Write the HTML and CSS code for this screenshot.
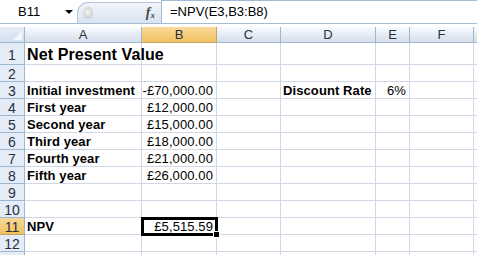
FILE: index.html
```html
<!DOCTYPE html>
<html lang="en">
<head>
    <meta charset="UTF-8">
    <title>Net Present Value</title>
    <link rel="stylesheet" href="styles.css">
</head>
<body>
    <!-- Formula Bar -->
    <div class="formula-bar">
        <div class="name-box">
            <span class="name-text">B11</span>
            <span class="name-arrow"></span>
        </div>
        <div class="fx-pill">
            <span class="pill-knob"></span>
            <span class="fx">f<sub>x</sub></span>
        </div>
        <div class="formula-input">=NPV(E3,B3:B8)</div>
    </div>

    <!-- Sheet -->
    <div class="sheet">
        <div class="corner"><span class="corner-tri"></span></div>
        <div class="col-head">A</div>
        <div class="col-head selected">B</div>
        <div class="col-head">C</div>
        <div class="col-head">D</div>
        <div class="col-head">E</div>
        <div class="col-head">F</div>
        <div class="col-head"></div>

        <div class="row-head">1</div>
        <div class="cell title">Net Present Value</div>
        <div class="cell"></div><div class="cell"></div><div class="cell"></div><div class="cell"></div><div class="cell"></div><div class="cell"></div>

        <div class="row-head">2</div>
        <div class="cell"></div><div class="cell"></div><div class="cell"></div><div class="cell"></div><div class="cell"></div><div class="cell"></div><div class="cell"></div>

        <div class="row-head">3</div>
        <div class="cell bold">Initial investment</div>
        <div class="cell num">-£70,000.00</div>
        <div class="cell"></div>
        <div class="cell bold">Discount Rate</div>
        <div class="cell num">6%</div>
        <div class="cell"></div><div class="cell"></div>

        <div class="row-head">4</div>
        <div class="cell bold">First year</div>
        <div class="cell num">£12,000.00</div>
        <div class="cell"></div><div class="cell"></div><div class="cell"></div><div class="cell"></div><div class="cell"></div>

        <div class="row-head">5</div>
        <div class="cell bold">Second year</div>
        <div class="cell num">£15,000.00</div>
        <div class="cell"></div><div class="cell"></div><div class="cell"></div><div class="cell"></div><div class="cell"></div>

        <div class="row-head">6</div>
        <div class="cell bold">Third year</div>
        <div class="cell num">£18,000.00</div>
        <div class="cell"></div><div class="cell"></div><div class="cell"></div><div class="cell"></div><div class="cell"></div>

        <div class="row-head">7</div>
        <div class="cell bold">Fourth year</div>
        <div class="cell num">£21,000.00</div>
        <div class="cell"></div><div class="cell"></div><div class="cell"></div><div class="cell"></div><div class="cell"></div>

        <div class="row-head">8</div>
        <div class="cell bold">Fifth year</div>
        <div class="cell num">£26,000.00</div>
        <div class="cell"></div><div class="cell"></div><div class="cell"></div><div class="cell"></div><div class="cell"></div>

        <div class="row-head">9</div>
        <div class="cell"></div><div class="cell"></div><div class="cell"></div><div class="cell"></div><div class="cell"></div><div class="cell"></div><div class="cell"></div>

        <div class="row-head">10</div>
        <div class="cell"></div><div class="cell"></div><div class="cell"></div><div class="cell"></div><div class="cell"></div><div class="cell"></div><div class="cell"></div>

        <div class="row-head selected">11</div>
        <div class="cell bold">NPV</div>
        <div class="cell num active">£5,515.59<span class="fill-handle"></span></div>
        <div class="cell"></div><div class="cell"></div><div class="cell"></div><div class="cell"></div><div class="cell"></div>

        <div class="row-head">12</div>
        <div class="cell"></div><div class="cell"></div><div class="cell"></div><div class="cell"></div><div class="cell"></div><div class="cell"></div><div class="cell"></div>

        <!-- Row 13, only its top edge is visible -->
        <div class="row-head stub"></div>
        <div class="cell stub"></div><div class="cell stub"></div><div class="cell stub"></div><div class="cell stub"></div><div class="cell stub"></div><div class="cell stub"></div><div class="cell stub"></div>
    </div>
</body>
</html>
```

FILE: styles.css
```css
/* Colour Palette */
:root {
    --grid-line: #d0d7e5;
    --head-line: #9eb6ce;
    --head-text: #27313f;
    --bar-line: #a5bad4;
    --sel-top: #f9d99a;
    --sel-bottom: #f1c15f;
}

body {
    margin: 0;
    background: #ffffff;
    font-family: 'Liberation Sans', Arial, sans-serif;
    font-size: 13px;
    color: #000000;
    overflow: hidden;
}

/* Formula Bar */
.formula-bar {
    display: flex;
    height: 24px;
    margin-bottom: 3px;
    border-bottom: 1px solid var(--bar-line);
    box-sizing: border-box;
}

.name-box {
    width: 77px;
    display: flex;
    align-items: center;
    padding-left: 18px;
    box-sizing: border-box;
}

.name-text {
    width: 47px;
}

.name-arrow {
    width: 0;
    height: 0;
    border-left: 4px solid transparent;
    border-right: 4px solid transparent;
    border-top: 4px solid #000000;
}

.fx-pill {
    width: 84px;
    margin-top: 2px;
    display: flex;
    align-items: center;
    justify-content: space-between;
    padding: 0 5px 0 5px;
    box-sizing: border-box;
    border: 1px solid #b6c6da;
    border-right: none;
    border-bottom: none;
    border-radius: 11px 0 0 0;
    background: linear-gradient(#f2f5fa, #d9e3f0);
}

.pill-knob {
    width: 10px;
    height: 12px;
    border-radius: 50%;
    background: radial-gradient(circle at 45% 45%, #f4f4f4, #b9bcc1);
}

.fx {
    font-family: 'Liberation Serif', serif;
    font-style: italic;
    font-weight: bold;
    font-size: 14px;
    color: #4a4a4a;
    margin-right: 1px;
}

.fx sub {
    font-size: 9px;
    vertical-align: -1px;
}

.formula-input {
    flex: 1;
    border-top: 1px solid var(--bar-line);
    border-left: 1px solid var(--bar-line);
    padding: 3px 0 0 8px;
    box-sizing: border-box;
}

/* Sheet Grid */
.sheet {
    display: grid;
    grid-template-columns: 25px 117px 75px 64px 95px 34px 64px 1fr;
    grid-template-rows: 16px 22px repeat(11, 17px) 3px;
}

.corner {
    position: relative;
    background: linear-gradient(#e6edf6, #d4dfee);
    border-right: 1px solid var(--head-line);
    border-bottom: 1px solid var(--head-line);
}

.corner-tri {
    position: absolute;
    right: 2px;
    bottom: 2px;
    width: 0;
    height: 0;
    border-left: 9px solid transparent;
    border-bottom: 9px solid #f4f7fb;
}

.col-head {
    display: flex;
    align-items: center;
    justify-content: center;
    background: linear-gradient(#f9fbfd, #e3e9f3 60%, #d6dfec);
    border-right: 1px solid var(--head-line);
    border-bottom: 1px solid var(--head-line);
    color: var(--head-text);
    box-sizing: border-box;
}

.col-head.selected {
    background: linear-gradient(var(--sel-top), var(--sel-bottom));
    border-right-color: #c2a36a;
    border-bottom-color: #c2a36a;
}

.row-head {
    display: flex;
    align-items: center;
    justify-content: center;
    padding-top: 2px;
    background: #e4ecf7;
    border-right: 1px solid var(--head-line);
    border-bottom: 1px solid var(--head-line);
    color: var(--head-text);
    font-size: 14px;
    box-sizing: border-box;
}

.row-head.selected {
    background: linear-gradient(var(--sel-top), var(--sel-bottom));
    border-bottom-color: #c2a36a;
}

.cell {
    display: flex;
    align-items: flex-end;
    padding: 0 3px 0 2px;
    border-right: 1px solid var(--grid-line);
    border-bottom: 1px solid var(--grid-line);
    box-sizing: border-box;
    white-space: nowrap;
    overflow: visible;
    letter-spacing: 0.1px;
}

.row-head.stub,
.cell.stub {
    padding: 0;
    border-bottom: none;
}

.cell.bold {
    font-weight: bold;
}

.cell.title {
    font-weight: bold;
    font-size: 16px;
    padding-bottom: 0;
}

.cell.num {
    justify-content: flex-end;
}

/* Active cell */
.cell.active {
    position: relative;
    outline: 3px solid #000000;
    outline-offset: -2px;
    z-index: 1;
}

.fill-handle {
    position: absolute;
    right: -4px;
    bottom: -4px;
    width: 5px;
    height: 5px;
    background: #000000;
    border: 1px solid #ffffff;
}
```
